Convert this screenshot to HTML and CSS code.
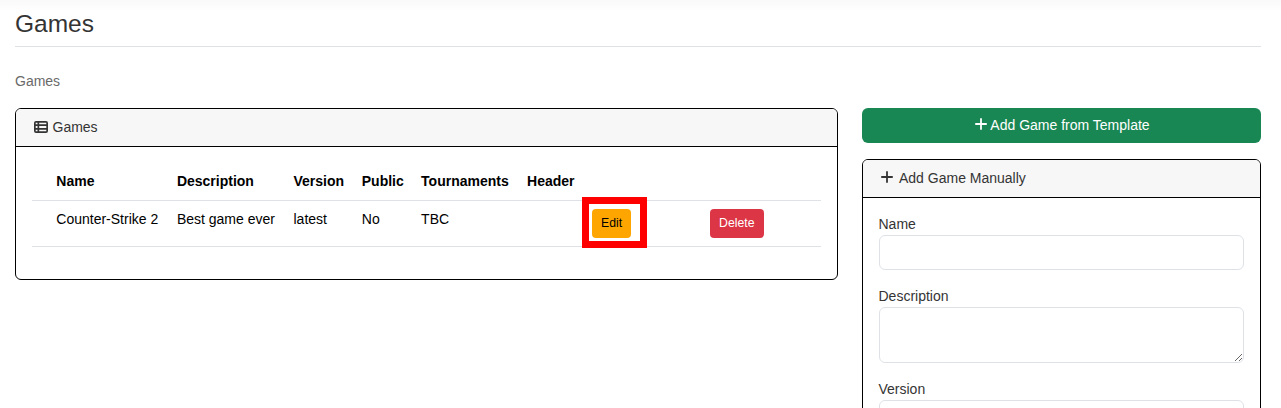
FILE: index.html
```html
<!DOCTYPE html>
<html lang="en">
<head>
<meta charset="utf-8">
<title>Games</title>
<link rel="stylesheet" href="styles.css">
</head>
<body>
<main class="page">
  <h1 class="title">Games</h1>
  <div class="breadcrumb">Games</div>
  <div class="layout">
    <section class="card list-card">
      <header class="card-header"><span class="icon-fw"><svg class="icon-list" viewBox="0 0 14 12"><path fill="currentColor" fill-rule="evenodd" d="M2 0H12A2 2 0 0 1 14 2V10A2 2 0 0 1 12 12H2A2 2 0 0 1 0 10V2A2 2 0 0 1 2 0ZM1.7 1.7V3.3H3.5V1.7ZM5.2 1.7V3.3H12.3V1.7ZM1.7 5.1V6.9H3.5V5.1ZM5.2 5.1V6.9H12.3V5.1ZM1.7 8.7V10.3H3.5V8.7ZM5.2 8.7V10.3H12.3V8.7Z"/></svg></span>Games</header>
      <div class="card-body">
        <table class="table">
          <colgroup><col class="c-gap"><col class="c-name"><col class="c-desc"><col class="c-version"><col class="c-public"><col class="c-tour"><col class="c-header"><col class="c-edit"><col></colgroup>
          <thead><tr><th></th><th>Name</th><th>Description</th><th>Version</th><th>Public</th><th>Tournaments</th><th>Header</th><th></th><th></th></tr></thead>
          <tbody><tr><td></td><td>Counter-Strike 2</td><td>Best game ever</td><td>latest</td><td>No</td><td>TBC</td><td></td>
            <td><div class="marked"><button class="btn btn-sm btn-edit">Edit</button><span class="marker"></span></div></td>
            <td><button class="btn btn-sm btn-delete">Delete</button></td></tr></tbody>
        </table>
      </div>
    </section>
    <aside class="side">
      <button class="btn btn-add"><svg class="icon-plus" viewBox="0 0 12 12"><path d="M6 .9V11.1M.9 6H11.1" fill="none" stroke="currentColor" stroke-width="1.8" stroke-linecap="round"/></svg>Add Game from Template</button>
      <section class="card">
        <header class="card-header"><span class="icon-fw"><svg class="icon-plus" viewBox="0 0 12 12"><path d="M6 .9V11.1M.9 6H11.1" fill="none" stroke="currentColor" stroke-width="1.8" stroke-linecap="round"/></svg></span>Add Game Manually</header>
        <form class="card-body">
          <div class="field"><label for="name">Name</label><input id="name" class="control"></div>
          <div class="field"><label for="description">Description</label><textarea id="description" class="control" rows="2"></textarea></div>
          <div class="field"><label for="version">Version</label><input id="version" class="control"></div>
        </form>
      </section>
    </aside>
  </div>
</main>
</body>
</html>
```
FILE: styles.css
```css
* { box-sizing: border-box; }
html { overflow: hidden; }
body {
  margin: 0;
  height: 408px;
  overflow: hidden;
  font: 14px/21px "Liberation Sans", Arial, sans-serif;
  color: #343434;
  background: linear-gradient(#f9f9f9, #fff 12px) #fff;
}
.page { height: 408px; overflow: hidden; padding: 9px 20px 0 15px; }
.title {
  margin: 0 0 24px;
  height: 38px;
  font-size: 24.5px;
  line-height: 29.4px;
  font-weight: 400;
  border-bottom: 1px solid #dee2e6;
}
.breadcrumb { margin-bottom: 16px; color: #6a6a6a; }
.layout { display: grid; grid-template-columns: 823px 399px; column-gap: 24px; align-items: start; }
.card { border: 1px solid #000; border-radius: 6px; background: #fff; }
.card-header {
  display: flex;
  align-items: center;
  gap: 3.5px;
  height: 38px;
  padding: 0 16px;
  border-bottom: 1px solid #000;
  border-radius: 5px 5px 0 0;
  background: #f7f7f7;
}
.icon-fw { display: flex; justify-content: center; width: 17px; margin-bottom: 1px; }
.icon-list { width: 14px; height: 12px; }
.icon-plus { width: 12px; height: 12px; flex: none; margin-bottom: 2px; }
.card-body { padding: 16px; }
.side .card-header { padding-left: 15.5px; }
.side .card-body { padding: 16px; }
.table {
  width: 100%;
  margin-bottom: 16px;
  table-layout: fixed;
  border-collapse: separate;
  border-spacing: 0;
  color: #000;
}
.table th, .table td {
  padding: 8px;
  text-align: left;
  vertical-align: top;
  white-space: nowrap;
  border-bottom: 1px solid #dee2e6;
}
.table th { height: 38px; }
.table td { height: 46px; }
.c-gap { width: 16.3px; }
.c-name { width: 120.6px; }
.c-desc { width: 116.6px; }
.c-version { width: 68.3px; }
.c-public { width: 59.3px; }
.c-tour { width: 106px; }
.c-header { width: 65px; }
.c-edit { width: 118px; }
.btn {
  display: inline-flex;
  align-items: center;
  justify-content: center;
  border: 0;
  font-family: inherit;
  color: #fff;
}
.btn-sm { height: 29px; padding: 0 9px 2px; font-size: 12.25px; border-radius: 4px; vertical-align: top; }
.btn-edit { background: #ffa500; color: #000; }
.btn-delete { padding-right: 9.5px; background: #dc3545; }
.marked { position: relative; height: 29px; }
.marker { position: absolute; left: -10.5px; top: -12px; width: 65px; height: 51px; border: 7px solid #f00; }
.btn-add {
  width: 100%;
  height: 35px;
  gap: 3px;
  margin-bottom: 16px;
  padding: 0 0 2px 2px;
  font-size: 14px;
  border-radius: 6px;
  background: #198754;
}
.side { display: flex; flex-direction: column; }
.field { margin-bottom: 16px; }
.field label { display: block; margin-left: -0.5px; }
.control {
  display: block;
  width: 100%;
  height: 35px;
  padding: 6px 12px;
  border: 1px solid #dee2e6;
  border-radius: 6px;
  background: #fff;
  font: inherit;
}
textarea.control { height: 56px; resize: vertical; }
```
